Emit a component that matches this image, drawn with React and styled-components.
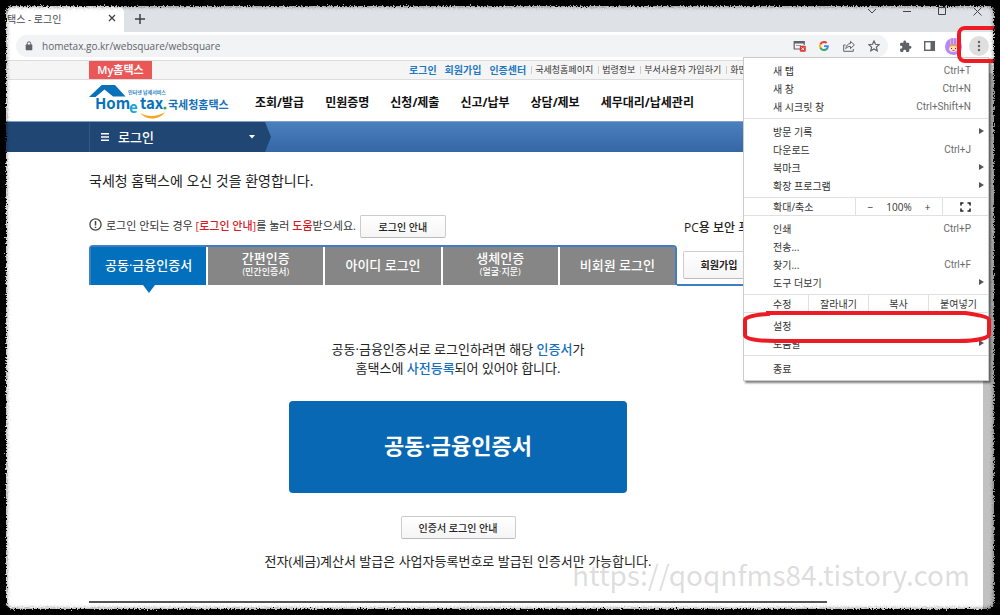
import React from "react";
import styled, { createGlobalStyle, css } from "styled-components";

const GlobalStyle = createGlobalStyle`
  * {
    box-sizing: border-box;
  }
  body {
    margin: 0;
    background: #fff;
    color: #333;
    font-family: "Open Sans", "Noto Sans CJK KR", sans-serif;
    font-size: 12px;
    overflow: hidden;
  }
  button, input {
    font-family: inherit;
    color: inherit;
    margin: 0;
    padding: 0;
    border: none;
    background: none;
  }
  a {
    color: inherit;
    text-decoration: none;
  }
  h1, h2, p, ul {
    margin: 0;
    padding: 0;
    font-weight: inherit;
  }
  svg {
    display: block;
    flex: none;
  }
`;

const Window = styled.div`
  position: relative;
  display: flex;
  flex-direction: column;
  height: 100vh;
  overflow: hidden;
`;

/* browser chrome */
const TabStrip = styled.div`
  display: flex;
  align-items: flex-end;
  height: 32px;
  background: #dee1e6;
`;
const BrowserTab = styled.div`
  display: flex;
  align-items: center;
  justify-content: space-between;
  width: 124px;
  height: 26px;
  padding: 0 8px 2px 7px;
  border-radius: 0 6px 0 0;
  background: #fff;
  color: #45494d;
  font-size: 10px;
`;
const IconButton = styled.button`
  display: flex;
  align-items: center;
  justify-content: center;
  width: ${(props) => props.$size || 16}px;
  height: ${(props) => props.$size || 16}px;
  border-radius: 50%;
  background: ${(props) => (props.$active ? "#dfdfdf" : "none")};
  color: #5f6368;
`;
const NewTab = styled(IconButton)`
  margin: 0 0 5px 8px;
`;
const WindowButtons = styled.div`
  display: flex;
  align-self: flex-start;
  gap: 19px;
  margin: 3px 15px 0 auto;
`;
const Toolbar = styled.div`
  display: flex;
  align-items: center;
  height: 29px;
  padding: 0 11px 0 16px;
  border-bottom: 1px solid #dcdcdc;
  background: #fff;
`;
const AddressBar = styled.div`
  display: flex;
  flex: 1;
  align-items: center;
  gap: 9px;
  height: 22px;
  padding: 0 6px 0 9px;
  border-radius: 11px;
  background: #f1f3f4;
`;
const Address = styled.input`
  flex: 1;
  min-width: 0;
  outline: none;
  color: #5f6368;
  font-size: 10px;
`;
const IconRow = styled.div`
  display: flex;
  gap: 9px;
`;
const ToolbarIcons = styled.div`
  display: flex;
  align-items: center;
  gap: 8px;
  margin-left: 9px;
`;

/* site header */
const Site = styled.div`
  display: flex;
  flex: 1;
  min-height: 0;
`;
const Page = styled.div`
  flex: 1;
  min-width: 0;
  overflow: hidden;
`;
const Scrollbar = styled.div`
  width: 17px;
  padding-top: 12px;
  background: #f1f1f1;
`;
const Thumb = styled.div`
  height: 100%;
  background: #c1c1c1;
`;
const TopBar = styled.div`
  display: flex;
  align-items: center;
  height: 19px;
  padding-left: 89px;
  border-bottom: 1px solid #dcdcdc;
  background: #f5f5f5;
  white-space: nowrap;
`;
const MyHometax = styled.a`
  width: 63px;
  height: 18px;
  background: #eb5757;
  color: #fff;
  font-size: 11px;
  font-weight: 600;
  line-height: 18px;
  text-align: center;
`;
const UtilLinks = styled.div`
  display: flex;
  align-items: center;
  gap: 8px;
  margin-left: 257px;
  font-size: 9px;
  line-height: 12px;
`;
const UtilLink = styled.a`
  ${(props) =>
    props.$strong &&
    css`
      color: #1e78c2;
      font-size: 10px;
      font-weight: 700;
    `}
  ${(props) =>
    props.$divided &&
    css`
      margin-left: -3px;
      padding-left: 3px;
      border-left: 1px solid #ccc;
      line-height: 8px;
    `}
`;
const Header = styled.header`
  display: flex;
  align-items: center;
  gap: 24px;
  height: 41px;
  padding-left: 89px;
  white-space: nowrap;
`;
const MainNav = styled.nav`
  display: flex;
  gap: 21px;
  padding-top: 3px;
  color: #111;
  font-size: 12px;
  font-weight: 700;
`;
const NavBand = styled.div`
  display: flex;
  height: 31px;
  border-top: 1px solid #7f9fc4;
  background: linear-gradient(#4a80be, #3566a5);
`;
const NavCurrent = styled.div`
  width: 271px;
  padding-left: 89px;
  background: #204674;
  clip-path: polygon(0 0, 265px 0, 100% 50%, 265px 100%, 0 100%);
`;
const NavButton = styled.button`
  display: flex;
  align-items: center;
  gap: 9px;
  width: 166px;
  height: 30px;
  padding-left: 11px;
  border-left: 1px solid #2f5788;
  color: #fff;
  font-size: 13px;
  font-weight: 500;
  line-height: 16px;
  & svg:last-child {
    margin-left: auto;
  }
`;

/* login page */
const Columns = styled.main`
  display: flex;
  padding-left: 89px;
`;
const LoginColumn = styled.div`
  width: 588px;
  flex: none;
`;
const Title = styled.h1`
  margin-top: 19px;
  color: #222;
  font-size: 14px;
  line-height: 20px;
  white-space: nowrap;
`;
const Notice = styled.div`
  display: flex;
  align-items: center;
  gap: 4px;
  margin-top: 24px;
  font-size: 11px;
  white-space: nowrap;
  & > p {
    padding-bottom: 4px;
  }
  & > svg {
    margin-bottom: 4px;
  }
`;
const Red = styled.span`
  color: #d7191f;
  font-weight: 500;
`;
const Blue = styled.span`
  color: #1470bd;
  font-weight: 500;
`;
const SmallButton = styled.button`
  width: ${(props) => props.$width}px;
  height: 23px;
  padding-bottom: 1px;
  border: 1px solid #ccc;
  border-bottom-color: #bbb;
  border-radius: 2px;
  background: linear-gradient(#fff, #f5f5f5);
  color: #222;
  font-size: 10px;
  font-weight: 500;
`;
const LoginTabs = styled.div`
  display: grid;
  grid-template-columns: repeat(5, 1fr);
  gap: 2px;
  height: 40px;
  margin-top: 7px;
  border: 2px solid #3f7fc1;
  border-bottom: none;
  border-radius: 4px 4px 0 0;
`;
const LoginTab = styled.button`
  position: relative;
  padding-bottom: 3px;
  background: ${(props) => (props.$active ? "#0270bd" : "#868686")};
  color: #fff;
  font-size: 13px;
  font-weight: 500;
  line-height: 14px;
  white-space: nowrap;
  & small {
    display: block;
    font-size: 9px;
  }
  ${(props) =>
    props.$active &&
    css`
      &::after {
        content: "";
        position: absolute;
        top: 100%;
        left: 50%;
        margin-left: -6px;
        border: 6px solid transparent;
        border-top: 8px solid #0270bd;
      }
    `}
`;
const Panel = styled.section`
  display: flex;
  flex: none;
  flex-direction: column;
  align-items: center;
  width: 738px;
  padding-top: 54px;
  color: #222;
  text-align: center;
  white-space: nowrap;
`;
const Guide = styled.p`
  font-size: 13px;
  line-height: 19px;
`;
const CertButton = styled.button`
  width: 338px;
  height: 92px;
  margin: 23px 0;
  padding-bottom: 6px;
  border-radius: 4px;
  background: #0868b3;
  color: #fff;
  font-size: 22px;
  font-weight: 700;
`;
const IssueNote = styled.p`
  margin-top: 12px;
  font-size: 13px;
  line-height: 20px;
`;
const Rule = styled.div`
  width: 738px;
  margin: 30px 0 0 89px;
  border-top: 2px solid #555;
`;
const SideColumn = styled.aside`
  flex: 1;
  min-width: 0;
  padding-top: 66px;
  overflow: hidden;
  white-space: nowrap;
`;
const SideTitle = styled.h2`
  padding-left: 7px;
  color: #222;
  font-size: 12px;
  font-weight: 500;
  line-height: 20px;
`;
const SideBox = styled.div`
  height: 48px;
  padding: 13px 0 0 6px;
  border-bottom: 2px solid #3f7fc1;
`;
const JoinButton = styled(SmallButton)`
  height: 28px;
  font-weight: 700;
`;

/* browser menu */
const Menu = styled.div`
  position: absolute;
  top: 57px;
  right: 11px;
  width: 246px;
  border: 1px solid #ccc;
  background: #fff;
  box-shadow: 2px 2px 2px rgba(0, 0, 0, 0.5);
  color: #333;
  font-size: 10px;
`;
const MenuGroup = styled.div`
  padding: 3px 0;
  & + & {
    border-top: 1px solid #e0e0e0;
  }
`;
const MenuItem = styled.button`
  display: flex;
  align-items: center;
  justify-content: space-between;
  width: 100%;
  height: 18px;
  padding: 0 ${(props) => (props.$submenu ? 4 : 17)}px 0 29px;
  font-size: 10px;
  & kbd {
    color: #6b6b6b;
    font-family: Roboto, sans-serif;
    font-size: 10px;
  }
`;
const MenuBar = styled.div`
  display: grid;
  grid-template-columns: ${(props) => props.$columns};
  height: 19px;
  border-top: 1px solid #e0e0e0;
  border-bottom: 1px solid #e0e0e0;
  & > * {
    display: flex;
    align-items: center;
    justify-content: center;
    font-size: 10px;
  }
  & > * + * {
    border-left: 1px solid #e0e0e0;
  }
`;
const MenuLabel = styled.span`
  && {
    justify-content: flex-start;
    padding-left: 29px;
  }
`;
const ZoomControl = styled.div`
  gap: 13px;
  & button {
    font-size: 10px;
  }
`;
const SettingsMark = styled.svg`
  position: absolute;
  top: 252px;
  left: -2px;
  pointer-events: none;
`;
const MenuMark = styled.div`
  position: absolute;
  top: 26px;
  right: 0;
  width: 43px;
  height: 37px;
  border: 4px solid #ed1c24;
  border-radius: 8px;
  pointer-events: none;
`;

const Watermark = styled.div`
  position: absolute;
  right: 30px;
  bottom: 21px;
  color: rgba(120, 120, 120, 0.25);
  font-family: "Noto Sans CJK KR", sans-serif;
  font-size: 28px;
  line-height: 40px;
  pointer-events: none;
`;
/* torn black border, the filter roughens its inner edge */
const TornFrame = styled.div`
  position: absolute;
  inset: -14px;
  border: 20px solid #000;
  border-radius: 26px;
  box-shadow: inset 0 0 4px rgba(0, 0, 0, 0.6);
  filter: url(#torn);
  pointer-events: none;
`;

const closeIcon = (
  <svg width="8" height="8" viewBox="0 0 8 8" stroke="#3c4043" strokeWidth="1.3">
    <path d="M1 1l6 6M7 1L1 7" />
  </svg>
);
const plusIcon = (
  <svg width="10" height="10" viewBox="0 0 10 10" stroke="#3c4043" strokeWidth="1.5">
    <path d="M5 0v10M0 5h10" />
  </svg>
);
const lockIcon = (
  <svg width="8" height="10" viewBox="0 0 8 10" fill="#5f6368">
    <rect x="0.7" y="3.6" width="6.6" height="5.7" rx="0.7" />
    <path d="M2.2 4V2.6a1.8 1.8 0 013.6 0V4" fill="none" stroke="#5f6368" />
  </svg>
);
const popupIcon = (
  <svg width="13" height="12" viewBox="0 0 13 12" fill="none">
    <path d="M7 9H1.2V1.5h10V5" stroke="#5f6368" strokeWidth="1.2" />
    <path d="M1 2.3h10.4" stroke="#5f6368" strokeWidth="2.4" />
    <path d="M3 5.5h5" stroke="#9a9da0" />
    <rect x="6.8" y="5.8" width="6" height="6" rx="1" fill="#d93a30" />
    <path d="M8.4 7.4l2.8 2.8M11.2 7.4l-2.8 2.8" stroke="#fff" strokeWidth="0.9" />
  </svg>
);
const googleIcon = (
  <svg width="10" height="10" viewBox="0 0 48 48">
    <path
      fill="#ea4335"
      d="M24 9.5c3.5 0 6.7 1.2 9.2 3.6l6.9-6.9C35.9 2.4 30.5 0 24 0 14.6 0 6.5 5.4 2.6 13.2l8 6.2C12.4 13.7 17.7 9.5 24 9.5z"
    />
    <path
      fill="#4285f4"
      d="M47 24.6c0-1.6-.2-3.1-.4-4.6H24v9h12.9c-.6 3-2.2 5.5-4.7 7.2l7.7 6C44.4 38 47 31.8 47 24.6z"
    />
    <path fill="#fbbc05" d="M10.5 28.6A14.5 14.5 0 0110.5 19.4l-8-6.2a24 24 0 000 21.6z" />
    <path
      fill="#34a853"
      d="M24 48c6.5 0 11.9-2.1 15.9-5.8l-7.7-6c-2.2 1.5-4.9 2.3-8.2 2.3-6.3 0-11.6-4.2-13.5-9.9l-8 6.2C6.5 42.6 14.6 48 24 48z"
    />
  </svg>
);
const shareIcon = (
  <svg width="12" height="12" viewBox="0 0 12 12" fill="none" stroke="#5f6368">
    <path d="M2.5 5H.7v6.3h9.6V9" />
    <path d="M7.5 1.3v2.2C4.8 3.7 3.3 5.5 2.8 8.6 4 7 5.4 6.4 7.5 6.4v2.2l3.9-3.7z" />
  </svg>
);
const starIcon = (
  <svg width="12" height="12" viewBox="0 0 12 12" fill="none" stroke="#5f6368" strokeWidth="1.2">
    <path d="M6 1l1.5 3.3 3.6.4-2.7 2.4.8 3.6L6 8.9l-3.2 1.8.8-3.6L.9 4.7l3.6-.4z" />
  </svg>
);
const puzzleIcon = (
  <svg width="13" height="13" viewBox="0 0 24 24" fill="#5f6368">
    <path d="M20.5 11H19V7a2 2 0 00-2-2h-4V3.5a2.5 2.5 0 00-5 0V5H4a2 2 0 00-2 2v3.8h1.5a2.7 2.7 0 010 5.4H2V20a2 2 0 002 2h3.8v-1.5a2.7 2.7 0 015.4 0V22H17a2 2 0 002-2v-4h1.5a2.5 2.5 0 000-5z" />
  </svg>
);
const panelIcon = (
  <svg width="11" height="10" viewBox="0 0 11 10">
    <rect x="0.7" y="0.7" width="9.6" height="8.6" fill="none" stroke="#5f6368" strokeWidth="1.4" />
    <rect x="6.5" y="1" width="4" height="8" fill="#5f6368" />
  </svg>
);
const avatarIcon = (
  <svg width="17" height="17" viewBox="0 0 17 17">
    <circle cx="8.5" cy="8.5" r="8.5" fill="#b388ff" />
    <path d="M5.5 1v6M8.5 0v6M11.5 1v6" stroke="#e6b5d8" />
    <path d="M4 9l2-3 2.5 1L11 6l2 3v3.5H4z" fill="#f2a23a" />
    <ellipse cx="8.5" cy="11" rx="4.5" ry="3" fill="#fde0c0" />
    <path d="M6.5 10v1M10.5 10v1" stroke="#533" />
    <path d="M7.5 12.5h2" stroke="#d44" />
  </svg>
);
const dotsIcon = (
  <svg width="4" height="12" viewBox="0 0 4 12" fill="#5f6368">
    <circle cx="2" cy="2" r="1.2" />
    <circle cx="2" cy="6" r="1.2" />
    <circle cx="2" cy="10" r="1.2" />
  </svg>
);
const arrowIcon = (
  <svg width="5" height="6" viewBox="0 0 5 6" fill="#555">
    <path d="M0 0l5 3-5 3z" />
  </svg>
);
const fullscreenIcon = (
  <svg width="11" height="10" viewBox="0 0 11 10" fill="none" stroke="#222" strokeWidth="1.6">
    <path d="M1 3.5V1h2.5M7.5 1H10v2.5M10 6.5V9H7.5M3.5 9H1V6.5" />
  </svg>
);
const alertIcon = (
  <svg width="13" height="13" viewBox="0 0 13 13" fill="none" stroke="#444" strokeWidth="1.3">
    <circle cx="6.5" cy="6.5" r="5.6" />
    <path d="M6.5 3v4.5M6.5 8.7v1.3" strokeWidth="1.5" />
  </svg>
);
const listIcon = (
  <svg width="8" height="8" viewBox="0 0 8 8" fill="#fff">
    <path d="M0 0h8v1.5H0zM0 3.2h8v1.5H0zM0 6.4h8v1.5H0z" />
  </svg>
);
const caretIcon = (
  <svg width="6" height="4" viewBox="0 0 6 4" fill="#fff">
    <path d="M0 0h6L3 3.5z" />
  </svg>
);
const logo = (
  <svg width="142" height="38" viewBox="0 0 142 38" fontFamily="Noto Sans CJK KR, sans-serif" fontWeight="700">
    <path d="M0 15L12.7 3H26l10.5 11.5H24L15.5 7.5 6.5 15z" fill="#0871b9" />
    <text x="39" y="12" fontSize="5" fill="#2b83c4">
      인터넷 납세서비스
    </text>
    <g fontSize="15" fill="#0871b9">
      <text x="6" y="27">
        Hom
      </text>
      <text x="40" y="31" fill="#18a5dc">
        e
      </text>
      <text x="51" y="27">
        tax
      </text>
    </g>
    <circle cx="76" cy="26" r="1.6" fill="#36a852" />
    <path d="M51 31c7 4 17 4 25-1-5 8-18 9-25 1z" fill="#f6a81c" />
    <text x="79" y="27" fontSize="11" fill="#1470b8">
      국세청홈택스
    </text>
  </svg>
);

const mainMenu = ["조회/발급", "민원증명", "신청/제출", "신고/납부", "상담/제보", "세무대리/납세관리"];
const loginTabs = [
  { name: "공동·금융인증서" },
  { name: "간편인증", sub: "(민간인증서)" },
  { name: "아이디 로그인" },
  { name: "생체인증", sub: "(얼굴·지문)" },
  { name: "비회원 로그인" },
];

const Item = ({ label, keys, submenu }) => (
  <MenuItem $submenu={submenu}>
    {label}
    {keys && <kbd>{keys}</kbd>}
    {submenu && arrowIcon}
  </MenuItem>
);

const BrowserChrome = () => (
  <>
    <TabStrip>
      <BrowserTab>
        택스 - 로그인
        <IconButton $size={8} aria-label="탭 닫기">
          {closeIcon}
        </IconButton>
      </BrowserTab>
      <NewTab aria-label="새 탭">{plusIcon}</NewTab>
      <WindowButtons>
        <IconButton aria-label="탭 검색">
          <svg width="10" height="16" viewBox="0 0 10 16" fill="none" stroke="#444">
            <path d="M1 6l4 4 4-4" />
          </svg>
        </IconButton>
        <IconButton aria-label="최소화">
          <svg width="8" height="16" viewBox="0 0 8 16" stroke="#444">
            <path d="M0 8.5h8" />
          </svg>
        </IconButton>
        <IconButton aria-label="최대화">
          <svg width="8" height="8" viewBox="0 0 8 8" fill="none" stroke="#444">
            <path d="M.5.5h7v7h-7z" />
          </svg>
        </IconButton>
        <IconButton aria-label="닫기">
          <svg width="9" height="9" viewBox="0 0 9 9" stroke="#444">
            <path d="M.5.5l8 8M8.5.5l-8 8" />
          </svg>
        </IconButton>
      </WindowButtons>
    </TabStrip>
    <Toolbar>
      <AddressBar>
        {lockIcon}
        <Address aria-label="주소창" defaultValue="hometax.go.kr/websquare/websquare" />
        <IconRow>
          <IconButton aria-label="팝업 차단됨">{popupIcon}</IconButton>
          <IconButton aria-label="Google">{googleIcon}</IconButton>
          <IconButton aria-label="공유">{shareIcon}</IconButton>
          <IconButton aria-label="북마크">{starIcon}</IconButton>
        </IconRow>
      </AddressBar>
      <ToolbarIcons>
        <IconButton aria-label="확장 프로그램">{puzzleIcon}</IconButton>
        <IconButton aria-label="측면 패널">{panelIcon}</IconButton>
        <IconButton aria-label="프로필">{avatarIcon}</IconButton>
        <IconButton $size={20} $active aria-label="메뉴">
          {dotsIcon}
        </IconButton>
      </ToolbarIcons>
    </Toolbar>
  </>
);

const BrowserMenu = () => (
  <Menu>
    <MenuGroup>
      <Item label="새 탭" keys="Ctrl+T" />
      <Item label="새 창" keys="Ctrl+N" />
      <Item label="새 시크릿 창" keys="Ctrl+Shift+N" />
    </MenuGroup>
    <MenuGroup>
      <Item label="방문 기록" submenu />
      <Item label="다운로드" keys="Ctrl+J" />
      <Item label="북마크" submenu />
      <Item label="확장 프로그램" submenu />
    </MenuGroup>
    <MenuBar $columns="111px 1fr 46px">
      <MenuLabel>확대/축소</MenuLabel>
      <ZoomControl>
        <button aria-label="축소">−</button>
        100%
        <button aria-label="확대">+</button>
      </ZoomControl>
      <button aria-label="전체화면">{fullscreenIcon}</button>
    </MenuBar>
    <MenuGroup>
      <Item label="인쇄" keys="Ctrl+P" />
      <Item label="전송..." />
      <Item label="찾기..." keys="Ctrl+F" />
      <Item label="도구 더보기" submenu />
    </MenuGroup>
    <MenuBar $columns="64px 1fr 1fr 1fr">
      <MenuLabel>수정</MenuLabel>
      <button>잘라내기</button>
      <button>복사</button>
      <button>붙여넣기</button>
    </MenuBar>
    <MenuGroup>
      <Item label="설정" />
      <Item label="도움말" submenu />
    </MenuGroup>
    <MenuGroup>
      <Item label="종료" />
    </MenuGroup>
    <SettingsMark width="250" height="36" viewBox="0 0 250 36" fill="none" stroke="#ed1c24" strokeWidth="4">
      <path d="M26 4C12 5 3 7 3 10v15c0 4 12 6 30 6h184c18 0 30-3 30-7V10c0-3-10-5-24-7H26z" />
    </SettingsMark>
  </Menu>
);

const App = () => {
  return (
    <Window>
      <GlobalStyle />
      <BrowserChrome />
      <Site>
        <Page>
          <TopBar>
            <MyHometax href="#my">My홈택스</MyHometax>
            <UtilLinks>
              <UtilLink href="#login" $strong>로그인</UtilLink>
              <UtilLink href="#join" $strong>회원가입</UtilLink>
              <UtilLink href="#cert" $strong>인증센터</UtilLink>
              <UtilLink href="#nts" $divided>국세청홈페이지</UtilLink>
              <UtilLink href="#law" $divided>법령정보</UtilLink>
              <UtilLink href="#dept" $divided>부서사용자 가입하기</UtilLink>
              <UtilLink href="#zoom" $divided>화면</UtilLink>
            </UtilLinks>
          </TopBar>
          <Header>
            <a href="#home" aria-label="국세청홈택스">
              {logo}
            </a>
            <MainNav>
              {mainMenu.map((name) => (
                <a href="#menu" key={name}>
                  {name}
                </a>
              ))}
            </MainNav>
          </Header>
          <NavBand>
            <NavCurrent>
              <NavButton>
                {listIcon} 로그인 {caretIcon}
              </NavButton>
            </NavCurrent>
          </NavBand>
          <Columns>
            <LoginColumn>
              <Title>국세청 홈택스에 오신 것을 환영합니다.</Title>
              <Notice>
                {alertIcon}
                <p>
                  로그인 안되는 경우 <Red>[로그인 안내]</Red>를 눌러 <Red>도움</Red>받으세요.
                </p>
                <SmallButton $width={86}>로그인 안내</SmallButton>
              </Notice>
              <LoginTabs>
                {loginTabs.map((tab, index) => (
                  <LoginTab key={tab.name} $active={index === 0}>
                    {tab.name}
                    {tab.sub && <small>{tab.sub}</small>}
                  </LoginTab>
                ))}
              </LoginTabs>
            </LoginColumn>
            <SideColumn>
              <SideTitle>PC용 보안 프</SideTitle>
              <SideBox>
                <JoinButton $width={72}>회원가입</JoinButton>
              </SideBox>
            </SideColumn>
          </Columns>
          <Columns as="div">
            <Panel>
              <Guide>
                공동·금융인증서로 로그인하려면 해당 <Blue>인증서</Blue>가
                <br />
                홈택스에 <Blue>사전등록</Blue>되어 있어야 합니다.
              </Guide>
              <CertButton>공동·금융인증서</CertButton>
              <SmallButton $width={115}>인증서 로그인 안내</SmallButton>
              <IssueNote>
                전자(세금)계산서 발급은 사업자등록번호로 발급된 인증서만 가능합니다.
              </IssueNote>
            </Panel>
          </Columns>
          <Rule />
        </Page>
        <Scrollbar>
          <Thumb />
        </Scrollbar>
      </Site>
      <BrowserMenu />
      <MenuMark />
      <Watermark>https://qoqnfms84.tistory.com</Watermark>
      <svg width="0" height="0" aria-hidden="true">
        <filter id="torn" x="0" y="0" width="100%" height="100%">
          <feTurbulence type="fractalNoise" baseFrequency="0.7" numOctaves="2" seed="4" />
          <feDisplacementMap in="SourceGraphic" scale="5" xChannelSelector="R" yChannelSelector="G" />
        </filter>
      </svg>
      <TornFrame />
    </Window>
  );
};

export default App;
